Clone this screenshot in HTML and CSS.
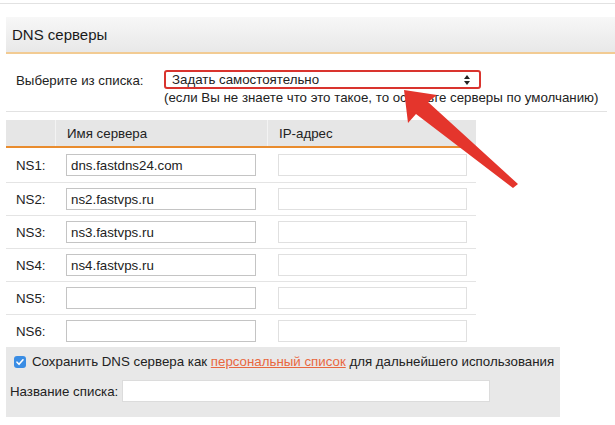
FILE: index.html
```html
<!DOCTYPE html>
<html lang="ru">
<head>
  <meta charset="UTF-8">
  <title>DNS серверы</title>
  <link rel="stylesheet" href="styles.css">
</head>
<body>
  <div class="topline"></div>

  <div class="section">
    <div class="section-head">DNS серверы</div>

    <div class="choose">
      <div class="choose-label">Выберите из списка:</div>
      <div class="choose-field">
        <div class="select">
          <span>Задать самостоятельно</span>
          <svg class="select-arrows" viewBox="0 0 8 12" width="8" height="12">
            <path d="M4 1 L7 5 L1 5 Z M4 11 L7 7 L1 7 Z" fill="#222"/>
          </svg>
        </div>
        <div class="hint">(если Вы не знаете что это такое, то оставьте серверы по умолчанию)</div>
      </div>
    </div>

    <div class="servers">
      <div class="row head">
        <div class="cell label"></div>
        <div class="cell">Имя сервера</div>
        <div class="cell">IP-адрес</div>
      </div>
      <div class="row first">
        <div class="cell label">NS1:</div>
        <div class="cell"><input class="name" type="text" value="dns.fastdns24.com"></div>
        <div class="cell"><input class="ip" type="text"></div>
      </div>
      <div class="row">
        <div class="cell label">NS2:</div>
        <div class="cell"><input class="name" type="text" value="ns2.fastvps.ru"></div>
        <div class="cell"><input class="ip" type="text"></div>
      </div>
      <div class="row">
        <div class="cell label">NS3:</div>
        <div class="cell"><input class="name" type="text" value="ns3.fastvps.ru"></div>
        <div class="cell"><input class="ip" type="text"></div>
      </div>
      <div class="row">
        <div class="cell label">NS4:</div>
        <div class="cell"><input class="name" type="text" value="ns4.fastvps.ru"></div>
        <div class="cell"><input class="ip" type="text"></div>
      </div>
      <div class="row">
        <div class="cell label">NS5:</div>
        <div class="cell"><input class="name" type="text"></div>
        <div class="cell"><input class="ip" type="text"></div>
      </div>
      <div class="row last">
        <div class="cell label">NS6:</div>
        <div class="cell"><input class="name" type="text"></div>
        <div class="cell"><input class="ip" type="text"></div>
      </div>
    </div>

    <div class="save">
      <div class="save-line">
        <span class="check">
          <svg viewBox="0 0 12 12" width="12" height="12">
            <path d="M3 6.2 L5 8.3 L9 3.8" fill="none" stroke="#fff" stroke-width="1.6" stroke-linecap="round" stroke-linejoin="round"/>
          </svg>
        </span>
        <span>Сохранить DNS сервера как <a href="#" class="link">персональный список</a> для дальнейшего использования</span>
      </div>
      <div class="save-name">
        <span>Название списка:</span>
        <input class="list-name" type="text">
      </div>
    </div>
  </div>

  <!-- стрелка поверх страницы -->
  <svg class="pointer" viewBox="0 0 615 425" width="615" height="425">
    <path d="M404 90 L408 123 L416 114 L513 188 L518 184 L428 102 L437 95 Z" fill="#e4352c"/>
  </svg>
</body>
</html>
```

FILE: styles.css
```css
* {
  margin: 0;
  padding: 0;
  box-sizing: border-box;
}

body {
  font-family: "Liberation Sans", Arial, sans-serif;
  font-size: 13.3px;
  color: #222;
  background-color: #fff;
  width: 615px;
  height: 425px;
  overflow: hidden;
  position: relative;
}

.topline {
  height: 1px;
  margin-top: 3px;
  background-color: #e2e2e2;
}

.section {
  margin-left: 6px;
}

.section-head {
  margin-top: 13px;
  height: 37px;
  padding-left: 6px;
  line-height: 35px;
  font-size: 15px;
  color: #1a1a1a;
  background: linear-gradient(#f7f7f7, #e8e8e8);
  border-bottom: 2px solid #f2cb93;
}

.choose {
  display: flex;
  padding: 16px 0 0 10px;
  height: 58px;
  width: 601px;
  border-bottom: 1px solid #e2e2e2;
}

.choose-label {
  width: 148px;
  padding-top: 3px;
}

.select {
  width: 317px;
  height: 19px;
  border: 2px solid #d9342e;
  border-radius: 3px;
  display: flex;
  align-items: center;
  justify-content: space-between;
  padding: 0 8px 0 6px;
}

.select span {
  line-height: 15px;
}

.hint {
  margin-top: 1px;
}

.servers {
  margin-top: 8px;
  width: 470px;
}

.row {
  display: grid;
  grid-template-columns: 49px 212px 209px;
  height: 33px;
  border-bottom: 1px solid #e4e4e4;
  align-items: center;
}

.row.first {
  height: 35px;
}

.row.last {
  border-bottom: none;
  height: 32px;
}

.row.head {
  height: 28px;
  background-color: #e6e6e6;
  border-bottom: 2px solid #e98c2e;
}

.row.head .cell {
  height: 100%;
  display: flex;
  align-items: center;
  padding-left: 11px;
}

.row.head .cell + .cell {
  border-left: 1px solid #f3f3f3;
}

.cell {
  padding-left: 11px;
}

.cell.label {
  padding-left: 10px;
}

input {
  font-family: "Liberation Sans", Arial, sans-serif;
  font-size: 13.3px;
  color: #222;
  height: 22px;
  padding: 0 4px;
  background-color: #fff;
  outline: none;
}

.name {
  width: 190px;
  border: 1px solid #c4c4c4;
}

.ip {
  width: 189px;
  border: 1px solid #e0e0e0;
}

.save {
  width: 554px;
  height: 70px;
  background-color: #e8e8e8;
  padding: 7px 0 0 4px;
}

.save-line {
  display: flex;
  align-items: center;
  gap: 6px;
  height: 15px;
}

.check {
  width: 12px;
  height: 12px;
  margin-left: 4px;
  border-radius: 3px;
  background-color: #3a8de4;
  display: flex;
}

.link {
  color: #e8673f;
  text-decoration: underline;
}

.save-name {
  display: flex;
  align-items: center;
  gap: 4px;
  margin-top: 11px;
}

.list-name {
  width: 368px;
  height: 22px;
  border: 1px solid #dcdcdc;
}

.pointer {
  position: absolute;
  left: 0;
  top: 0;
  pointer-events: none;
}
```
